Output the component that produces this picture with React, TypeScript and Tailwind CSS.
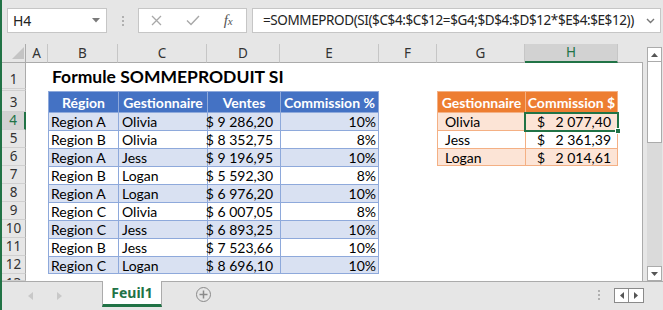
import React from "react";

const blue: string[][] = [
  ["Region A", "Olivia", "$ 9 286,20", "10%"],
  ["Region B", "Olivia", "$ 8 352,75", "8%"],
  ["Region A", "Jess", "$ 9 196,95", "10%"],
  ["Region B", "Logan", "$ 5 592,30", "8%"],
  ["Region A", "Logan", "$ 6 976,20", "10%"],
  ["Region C", "Olivia", "$ 6 007,05", "8%"],
  ["Region C", "Jess", "$ 6 893,25", "10%"],
  ["Region B", "Jess", "$ 7 523,66", "10%"],
  ["Region C", "Logan", "$ 8 696,10", "10%"],
];
const blueHead = ["Région", "Gestionnaire", "Ventes", "Commission %"];
const orange: string[][] = [
  ["Olivia", "2 077,40"],
  ["Jess", "2 361,39"],
  ["Logan", "2 014,61"],
];
const letters = ["A", "B", "C", "D", "E", "F", "G", "H"];

function Toolbar() {
  return (
    <div className="h-[44px] flex items-start pt-[8px] font-['Noto_Sans',sans-serif]">
      <div className="ml-[5px] w-[100px] h-[25px] bg-white border border-[#c6c6c6] flex items-center justify-between pl-[5px] pr-[6px]">
        <span className="text-[14px] text-[#222]">H4</span>
        <svg width="8" height="5" viewBox="0 0 8 5">
          <path d="M0 0H8L4 4.5Z" fill="#7a7a7a" />
        </svg>
      </div>
      <div className="w-[31px] h-[25px] flex flex-col items-center justify-center gap-[2px]">
        <div className="w-[2px] h-[2px] bg-[#b0b0b0]" />
        <div className="w-[2px] h-[2px] bg-[#b0b0b0]" />
        <div className="w-[2px] h-[2px] bg-[#b0b0b0]" />
      </div>
      <div className="w-[109px] h-[25px] bg-white border border-[#c6c6c6] flex items-center">
        <div className="w-[36px] flex justify-center">
          <svg width="11" height="11" viewBox="0 0 11 11">
            <path d="M1 1L10 10M10 1L1 10" stroke="#a8a8a8" strokeWidth="1.3" />
          </svg>
        </div>
        <div className="w-[36px] flex justify-center">
          <svg width="14" height="11" viewBox="0 0 14 11">
            <path d="M1 5.5L5 9.5L13 1" stroke="#a8a8a8" strokeWidth="1.4" fill="none" />
          </svg>
        </div>
        <div className="w-[36px] flex justify-center">
          <span className="font-['Liberation_Serif',serif] italic text-[15px] text-[#555] leading-none">
            f<span className="text-[11px]">x</span>
          </span>
        </div>
      </div>
      <div className="ml-[5px] w-[409px] h-[25px] bg-white border border-[#c6c6c6] flex items-center pl-[10px] pr-[5px]">
        <span className="flex-1 text-[13.5px] tracking-[-0.4px] text-[#222] whitespace-nowrap">
          =SOMMEPROD(SI($C$4:$C$12=$G4;$D$4:$D$12*$E$4:$E$12))
        </span>
        <svg width="9" height="6" viewBox="0 0 9 6">
          <path d="M1 1L4.5 4.5L8 1" stroke="#777" strokeWidth="1.4" fill="none" />
        </svg>
      </div>
    </div>
  );
}

function headerCells() {
  const out: React.ReactNode[] = [];
  out.push(
    <div
      key="corner"
      className="bg-[#e6e6e6] border-r border-b border-[#ababab] flex items-end justify-end pr-[1px] pb-[3px]"
    >
      <svg width="12" height="12" viewBox="0 0 12 12">
        <path d="M12 0V12H0Z" fill="#c4c4c4" />
      </svg>
    </div>
  );
  letters.forEach((l) => {
    const sel = l === "H";
    out.push(
      <div
        key={"h" + l}
        className={
          sel
            ? "bg-[#d2d2d2] border-r border-r-[#c6c6c6] border-b-2 border-b-[#217346] text-[#217346] flex items-center justify-center text-[13.5px] font-['Noto_Sans',sans-serif]"
            : "bg-[#e6e6e6] border-r border-r-[#c6c6c6] border-b border-b-[#ababab] text-[#333] flex items-center justify-center text-[13.5px] font-['Noto_Sans',sans-serif]"
        }
      >
        {l}
      </div>
    );
  });
  out.push(<div key="hblank" className="bg-[#e6e6e6] border-b border-[#ababab]" />);
  return out;
}

function rowHeader(r: number) {
  const sel = r === 4;
  const base =
    "flex justify-center text-[13.5px] font-['Noto_Sans',sans-serif] border-b border-b-[#d0d0d0] overflow-hidden ";
  const align = r === 13 ? "items-start" : "items-end";
  const cls = sel
    ? base + align + " bg-[#d2d2d2] text-[#217346] border-r-2 border-r-[#217346]"
    : base + align + " bg-[#e6e6e6] text-[#333] border-r border-r-[#ababab]";
  if (r === 2) return <div key={"r" + r} className={cls} />;
  return (
    <div key={"r" + r} className={cls}>
      <span className={r === 13 ? "leading-[17px] h-[18px] pt-[1px]" : "leading-[17px]"}>{r}</span>
    </div>
  );
}

function blueCell(r: number, c: number) {
  const isHead = r === 3;
  let cls = "border-l border-t border-[#8ea9db] flex items-center whitespace-nowrap text-[14px] ";
  if (c === 4) cls += "border-r ";
  if (r === 12) cls += "border-b ";
  if (isHead) {
    cls += "bg-[#4472c4] text-white font-bold justify-center";
    return (
      <div key={r + "-" + c} className={cls}>
        {blueHead[c - 1]}
      </div>
    );
  }
  cls += r % 2 === 0 ? "bg-[#d9e1f2] " : "bg-white ";
  if (c === 1) cls += "justify-start pl-[2px]";
  if (c === 2) cls += "justify-start pl-[3px]";
  if (c === 3) cls += "justify-end pr-[7px]";
  if (c === 4) cls += "justify-end pr-[2px]";
  return (
    <div key={r + "-" + c} className={cls}>
      {blue[r - 4][c - 1]}
    </div>
  );
}

function orangeCell(r: number, c: number) {
  const isHead = r === 3;
  let cls = "border-l border-t border-[#f4b084] flex items-center whitespace-nowrap text-[14px] ";
  if (c === 7) cls += "border-r ";
  if (r === 6) cls += "border-b ";
  if (isHead) {
    cls += "bg-[#ed7d31] text-white font-bold justify-center";
    return (
      <div key={r + "-" + c} className={cls}>
        {c === 6 ? "Gestionnaire" : "Commission $"}
      </div>
    );
  }
  cls += r % 2 === 0 ? "bg-[#fce4d6] " : "bg-white ";
  const d = orange[r - 4];
  if (c === 6) {
    return (
      <div key={r + "-" + c} className={cls + "pl-[7px]"}>
        {d[0]}
      </div>
    );
  }
  return (
    <div key={r + "-" + c} className={cls + "justify-between pl-[11px] pr-[6px] relative"}>
      <span>$</span>
      <span>{d[1]}</span>
      {r === 4 && (
        <div className="absolute left-[-2px] top-[-1px] right-[-2px] bottom-[-2px] border-2 border-[#217346] z-10">
          <div className="absolute right-[-4px] bottom-[-4px] w-[6px] h-[6px] bg-[#217346] border border-white" />
        </div>
      )}
    </div>
  );
}

function bodyCell(r: number, c: number) {
  const key = r + "-" + c;
  if (c === 8) return <div key={key} className="border-r border-[#ababab]" />;
  if (r === 1 && c === 1)
    return (
      <div
        key={key}
        className="relative z-10 flex items-end pl-[4px] pb-[4px] whitespace-nowrap text-[17.5px] font-bold leading-none"
      >
        Formule SOMMEPRODUIT SI
      </div>
    );
  if (c >= 1 && c <= 4 && r >= 3 && r <= 12) return blueCell(r, c);
  if (c >= 6 && c <= 7 && r >= 3 && r <= 6) return orangeCell(r, c);
  return <div key={key} />;
}

function Sheet() {
  const cells: React.ReactNode[] = [...headerCells()];
  for (let r = 1; r <= 13; r++) {
    cells.push(rowHeader(r));
    for (let c = 0; c <= 8; c++) cells.push(bodyCell(r, c));
  }
  return (
    <div className="w-[641px] h-[237px] bg-white grid grid-cols-[24px_22px_70px_89px_73px_99px_58px_88px_93px_25px] grid-rows-[19px_26px_2px_21px_repeat(9,18px)_7px] font-['Lato',sans-serif] text-black">
      {cells}
    </div>
  );
}

function VScroll() {
  return (
    <div className="w-[16px] pt-[3px] flex flex-col">
      <div className="w-[15px] h-[15px] bg-white border border-[#ababab] flex items-center justify-center">
        <svg width="7" height="4" viewBox="0 0 7 4">
          <path d="M0 4H7L3.5 0Z" fill="#555" />
        </svg>
      </div>
      <div className="w-[15px] h-[81px] bg-white border border-t-0 border-[#ababab]" />
      <div className="w-[15px] flex-1 bg-[#dadada]" />
      <div className="w-[15px] h-[15px] bg-white border border-[#ababab] flex items-center justify-center">
        <svg width="7" height="4" viewBox="0 0 7 4">
          <path d="M0 0H7L3.5 4Z" fill="#555" />
        </svg>
      </div>
    </div>
  );
}

function TabBar() {
  return (
    <div className="h-[29px] border-t border-[#ababab] flex items-start font-['Noto_Sans',sans-serif]">
      <div className="w-[100px] h-[28px] flex items-center">
        <svg className="ml-[26px]" width="5" height="8" viewBox="0 0 5 8">
          <path d="M5 0V8L0 4Z" fill="#c8c8c8" />
        </svg>
        <svg className="ml-[24px]" width="5" height="8" viewBox="0 0 5 8">
          <path d="M0 0V8L5 4Z" fill="#c8c8c8" />
        </svg>
      </div>
      <div className="mt-[-1px] w-[60px] h-[26px] bg-white border-l border-r border-[#ababab] border-b-[3px] border-b-[#217346] flex items-center justify-center text-[#217346] font-bold text-[14px]">
        Feuil1
      </div>
      <div className="ml-[34px] mt-[5px] w-[15px] h-[15px] rounded-full border-[1.5px] border-[#8a8a8a] flex items-center justify-center">
        <svg width="9" height="9" viewBox="0 0 9 9">
          <path d="M4.5 0.5V8.5M0.5 4.5H8.5" stroke="#8a8a8a" strokeWidth="1.5" />
        </svg>
      </div>
      <div className="ml-auto mt-[8px] flex flex-col gap-[2px]">
        <div className="w-[2px] h-[2px] bg-[#b0b0b0]" />
        <div className="w-[2px] h-[2px] bg-[#b0b0b0]" />
        <div className="w-[2px] h-[2px] bg-[#b0b0b0]" />
      </div>
      <div className="ml-[14px] mt-[6px] mr-[19px] flex">
        <div className="w-[15px] h-[15px] bg-white border border-[#8a8a8a] flex items-center justify-center">
          <svg width="4" height="7" viewBox="0 0 4 7">
            <path d="M4 0V7L0 3.5Z" fill="#555" />
          </svg>
        </div>
        <div className="w-[15px] h-[15px] bg-white border border-l-0 border-[#8a8a8a] flex items-center justify-center">
          <svg width="4" height="7" viewBox="0 0 4 7">
            <path d="M0 0V7L4 3.5Z" fill="#555" />
          </svg>
        </div>
      </div>
    </div>
  );
}

export default function App() {
  return (
    <div className="w-[663px] h-[310px] overflow-hidden bg-[#e6e6e6] border-l-2 border-[#217346] flex flex-col text-black">
      <Toolbar />
      <div className="flex h-[237px]">
        <Sheet />
        <div className="w-[4px]" />
        <VScroll />
      </div>
      <TabBar />
    </div>
  );
}
